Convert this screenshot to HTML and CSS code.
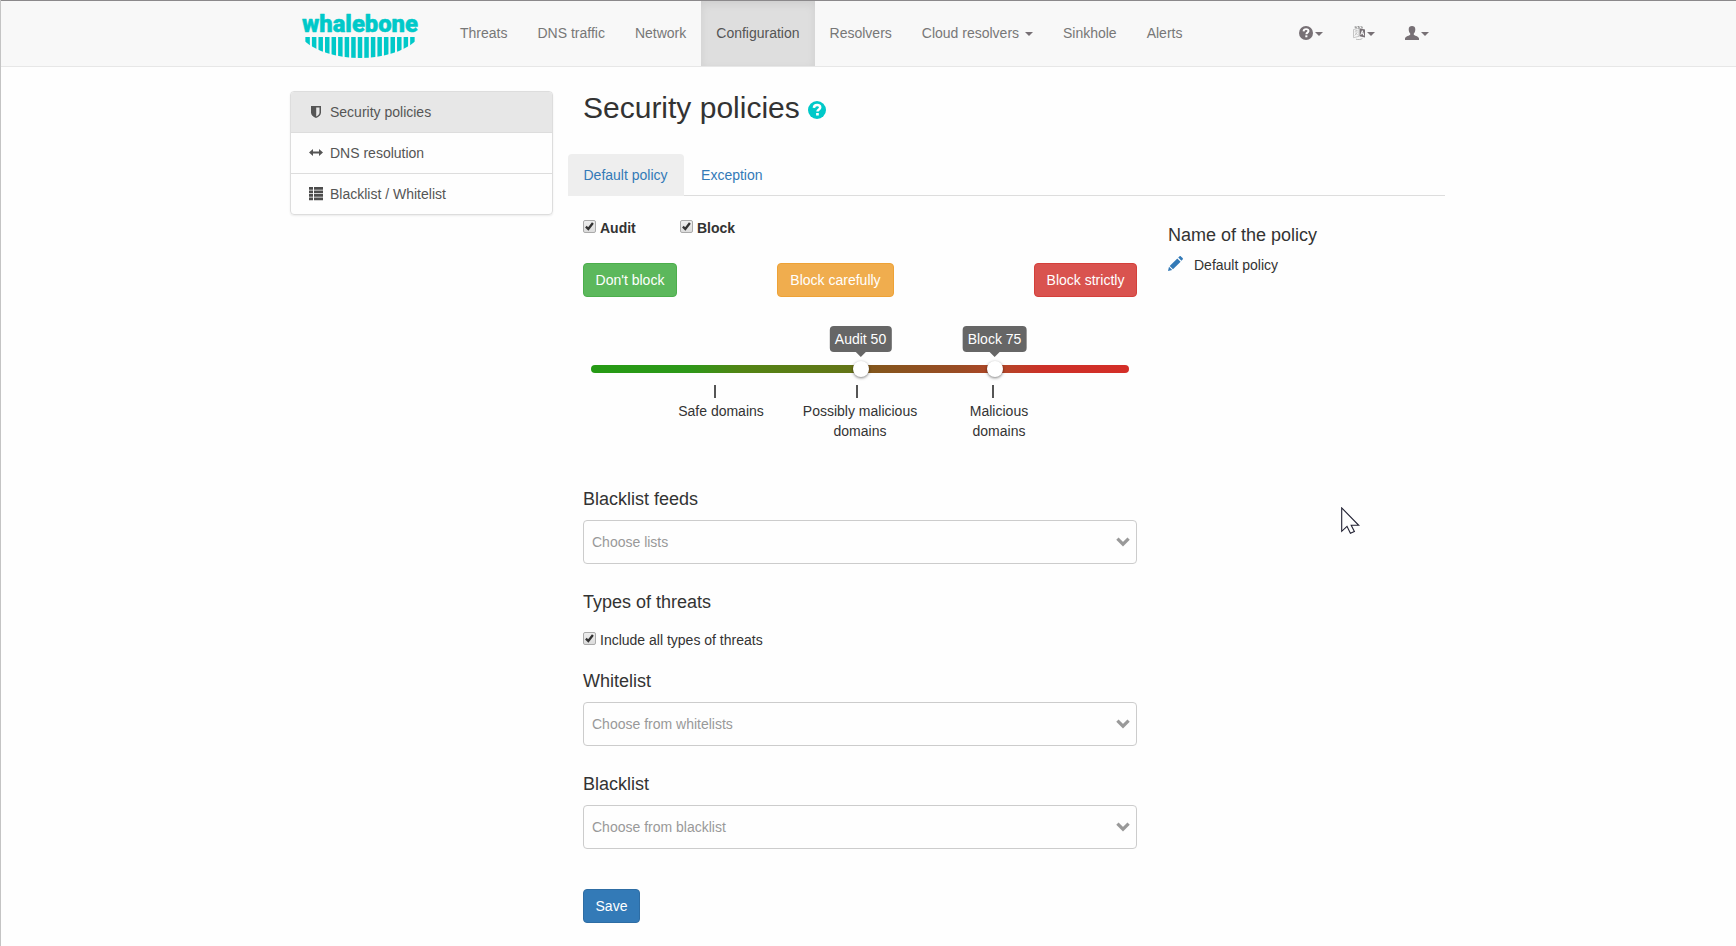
FILE: index.html
```html
<!DOCTYPE html>
<html lang="en">
<head>
<meta charset="utf-8">
<title>Security policies</title>
<link rel="stylesheet" href="styles.css">
</head>
<body>
<svg class="sprite" aria-hidden="true">
  <symbol id="check" viewBox="1 1 11 11"><path d="M2.900 6.700 5.300 9 9.900 3" fill="none" stroke="#333" stroke-width="2.300"/></symbol>
  <symbol id="chevron" viewBox="0 0 14 10"><path d="M1.400 1.600 7 7.200l5.600-5.600" fill="none" stroke="#999" stroke-width="3.200"/></symbol>
  <symbol id="question" viewBox="0 0 18 18"><circle cx="9" cy="9" r="9" fill="currentColor"/><path d="M5.900 6.900C6 4.900 7.200 4 9.100 4c1.900 0 3.100 1 3.100 2.500 0 2-2.700 2-2.700 4" fill="none" stroke="#fff" stroke-width="2.500"/><path d="M8.100 12h2.700v2.500H8.100z" fill="#fff"/></symbol>
</svg>
<header class="navbar">
  <div class="container navbar-inner">
    <a class="brand">
      <svg width="119" height="54" viewBox="0 -8 119 54">
        <defs><clipPath id="hull"><path d="M4 24H114V28.500C103 38 83 45 59 45S15 38 4 28.500Z"/></clipPath></defs>
        <text class="brand-text" x="1" y="18.700" textLength="116" lengthAdjust="spacingAndGlyphs">whalebone</text>
        <g clip-path="url(#hull)"><path class="brand-bars" d="M6.600 24v22m6.550-22v22m6.550-22v22m6.550-22v22m6.550-22v22m6.550-22v22m6.550-22v22m6.550-22v22m6.550-22v22m6.550-22v22m6.550-22v22m6.550-22v22m6.550-22v22m6.550-22v22m6.550-22v22m6.550-22v22m6.550-22v22"/></g>
      </svg>
    </a>
    <nav class="nav">
      <a>Threats</a><a>DNS traffic</a><a>Network</a><a class="active">Configuration</a><a>Resolvers</a><a>Cloud resolvers <i class="caret"></i></a><a>Sinkhole</a><a>Alerts</a>
    </nav>
    <nav class="nav tools">
      <a><svg width="14" height="14"><use href="#question"/></svg><i class="caret"></i></a>
      <a><svg width="12" height="14" viewBox="0 0 12 14"><path d="M6.500 2.300 12 3.500v8L6.500 10.300z" fill="#777075"/><path d="M7.800 8.800 9.300 4.700l1.500 4.800M8.300 7.700h2" fill="none" stroke="#f8f8f8"/><path d="M.5 3.500 6 2.300v8L.5 11.700zM1.800 5.300l3-.6M3.200 4v1.200M1.800 9.500 4.500 5.800M2.200 6.500l2.600 2.700" fill="none" stroke="#b9b9b9" stroke-width=".8"/><path d="M1.500 1 9.800 0M2 1.800h8" stroke="#888" stroke-width=".9" stroke-dasharray="2 1"/><path d="M3 13.200c2 .7 5 .5 6.500-.9" fill="none" stroke="#aaa" stroke-width=".8"/></svg><i class="caret"></i></a>
      <a><svg width="14" height="14" viewBox="0 0 14 14"><path d="M7 0C9 0 10.300 1.200 10.300 3.200c0 1.800-.5 3.300-1.500 4.200v1.400c0 .7 5.200 1.700 5.200 3.700V14H0v-1.500c0-2 5.200-3 5.200-3.700V7.400C4.200 6.500 3.700 5 3.700 3.200 3.700 1.200 5 0 7 0z" fill="#777075"/></svg><i class="caret"></i></a>
    </nav>
  </div>
</header>
<div class="container page">
  <aside class="list-group">
    <a class="active"><svg width="14" height="14" viewBox="0 0 14 14"><path fill-rule="evenodd" d="M2 1h10v6.500c0 2.500-2 4.300-5 5.500-3-1.200-5-3-5-5.500zM7.200 2.500v9c2-.9 3.300-2.200 3.300-4v-5z" fill="#555"/></svg>Security policies</a>
    <a><svg width="14" height="14" viewBox="0 0 14 14"><path d="M0 6.500 4 3v2.500h6V3l4 3.500-4 3.500V7.500H4V10z" fill="#555"/></svg>DNS resolution</a>
    <a><svg width="14" height="14" viewBox="0 0 14 14"><path d="M0 0h4v2.700H0zm5 0h9v2.700H5zM0 3.500h4v2.700H0zm5 0h9v2.700H5zM0 7h4v2.700H0zm5 0h9v2.700H5zM0 10.500h4v2.700H0zm5 0h9v2.700H5z" fill="#4c4c4c"/></svg>Blacklist / Whitelist</a>
  </aside>
  <main class="main">
    <h1>Security policies<svg width="18" height="18"><use href="#question"/></svg></h1>
    <div class="tabs"><a class="active">Default policy</a><a>Exception</a></div>
    <div class="columns">
      <form class="policy">
        <div class="modes">
          <label><svg class="checkbox"><use href="#check"/></svg>Audit</label>
          <label><svg class="checkbox"><use href="#check"/></svg>Block</label>
        </div>
        <div class="presets">
          <button type="button" class="btn success">Don't block</button>
          <button type="button" class="btn warning">Block carefully</button>
          <button type="button" class="btn danger">Block strictly</button>
        </div>
        <div class="slider">
          <div class="handle audit"><span class="tip">Audit 50</span></div>
          <div class="handle block"><span class="tip">Block 75</span></div>
        </div>
        <div class="scale">
          <div class="mark safe"><i></i>Safe domains</div>
          <div class="mark possible"><i></i>Possibly malicious<br>domains</div>
          <div class="mark malicious"><i></i>Malicious<br>domains</div>
        </div>
        <h4>Blacklist feeds</h4>
        <div class="select"><span>Choose lists</span><svg width="14" height="10"><use href="#chevron"/></svg></div>
        <h4>Types of threats</h4>
        <label class="include"><svg class="checkbox"><use href="#check"/></svg>Include all types of threats</label>
        <h4>Whitelist</h4>
        <div class="select"><span>Choose from whitelists</span><svg width="14" height="10"><use href="#chevron"/></svg></div>
        <h4>Blacklist</h4>
        <div class="select"><span>Choose from blacklist</span><svg width="14" height="10"><use href="#chevron"/></svg></div>
        <button type="button" class="btn primary">Save</button>
      </form>
      <section class="name">
        <h4>Name of the policy</h4>
        <p><svg width="15" height="15" viewBox="0 0 15 15"><path d="M0 15 1 10.800 4.200 14zM1.700 10 9.300 2.400l3.300 3.300L5 13.300zM10.200 1.600 11.400.4c.5-.5 1-.5 1.500 0l1.700 1.700c.5.5.5 1 0 1.500l-1.200 1.200z" fill="#337ab7"/></svg>Default policy</p>
      </section>
    </div>
  </main>
</div>
<svg class="cursor" width="20" height="28" viewBox="0 0 20 28"><path d="M.7.9V24.300L6 19.300l3.400 7 4-1.900L10.200 18.300h7.500z" fill="#fff" stroke="#223" stroke-width="1.100"/></svg>
</body>
</html>
```
FILE: styles.css
```css
* { box-sizing: border-box; }
body {
  margin: 0;
  height: 946px;
  overflow: hidden;
  border-left: 1px solid #c4c4c4;
  background: #fefefe;
  color: #333;
  font: 14px/20px "Liberation Sans", Arial, sans-serif;
}
.sprite { display: none; }
svg { flex: none; }
.container { width: 1170px; margin-left: 274px; padding: 0 15px; }
.navbar {
  height: 67px;
  border-top: 1px solid #8b898b;
  border-bottom: 1px solid #e7e7e7;
  background: #f8f8f8;
}
.navbar-inner { display: flex; height: 65px; padding-right: 0; }
.brand { flex: none; width: 155px; padding: 4px 0 0 11px; }
.brand svg { display: block; overflow: visible; }
.brand-text {
  font: 900 24px Roboto, sans-serif;
  fill: #00c9c9;
  stroke: #00c9c9;
  stroke-width: .5;
  stroke-linejoin: round;
}
.brand-bars { stroke: #00c9c9; stroke-width: 4.500; }
.nav { display: flex; flex: none; white-space: nowrap; }
.nav a { padding: 22px 15px 0; color: #777; }
.nav a.active {
  background: #dedede;
  box-shadow: inset 0 3px 9px rgba(0, 0, 0, .075);
  color: #555;
}
.caret {
  display: inline-block;
  margin-left: 2px;
  vertical-align: middle;
  border: 4px solid transparent;
  border-top-color: #777075;
  border-bottom: 0;
}
.tools { margin-left: 87px; }
.tools a { display: flex; align-items: center; padding: 0 15px 1px; color: #777075; }
.tools .caret { margin-top: 2px; }
.page { display: flex; gap: 15px; padding-top: 24px; padding-right: 0; }
.list-group {
  width: 263px;
  height: 124px;
  border: 1px solid #ddd;
  border-radius: 4px;
  box-shadow: 0 1px 2px rgba(0, 0, 0, .075);
  overflow: hidden;
}
.list-group a { display: flex; align-items: center; gap: 7px; height: 41px; padding: 0 18px 1px; color: #555; border-bottom: 1px solid #ddd; }
.list-group a.active { background: #e7e7e7; }
.main { width: 877px; }
h1, h4 { font-weight: 400; }
h1 { display: flex; align-items: center; gap: 8px; height: 33px; margin: 0 0 30px; padding-left: 15px; font-size: 30px; line-height: 33px; }
h1 svg { color: #00c9c9; margin-top: 5px; }
.tabs { display: flex; gap: 2px; height: 42px; border-bottom: 1px solid #ddd; }
.tabs a { height: 42px; padding: 11px 16px 0 15.500px; color: #337ab7; }
.tabs a.active { background: #eee; border-radius: 4px 4px 0 0; }
.columns { display: flex; gap: 31px; padding-left: 15px; }
.policy { width: 554px; }
.modes { display: flex; padding-top: 22px; font-weight: 700; }
label { display: flex; gap: 4px; }
.modes label { width: 97px; }
.checkbox { width: 13px; height: 13px; margin-top: 1.500px; border: 1px solid #aaa; border-radius: 2px; background: linear-gradient(#eee, #dcdcdc); }
.presets { display: flex; margin-top: 25px; }
.btn { height: 34px; padding: 0 0 1px; border: 1px solid; border-radius: 4px; color: #fff; font: inherit; }
.success { width: 94px; background: #5cb85c; border-color: #4cae4c; }
.warning { width: 117px; margin-left: 100px; background: #f0ad4e; border-color: #eea236; }
.danger { width: 103px; margin-left: auto; background: #d9534f; border-color: #d43f3a; }
.primary { display: block; width: 57px; margin-top: 40px; background: #337ab7; border-color: #2e6da4; }
.slider {
  position: relative;
  width: 538px;
  height: 8px;
  margin: 68px 0 0 8px;
  border-radius: 4px;
  background: linear-gradient(90deg, #259a14 0, #2d9819 18%, #528414 28%, #637517 48%, #83561c 52%, #994c24 68%, #b54427 77%, #cc3028 84%, #d42e27);
}
.handle { position: absolute; top: -4px; width: 16px; height: 16px; border-radius: 50%; background: #fff; box-shadow: 0 1px 3px rgba(0, 0, 0, .5); }
.audit { left: 262px; }
.block { left: 396px; }
.tip { position: absolute; left: 7.500px; bottom: 25px; transform: translateX(-50%); height: 26px; padding: 3px 5.500px; border-radius: 4px; background: #666; color: #fff; white-space: nowrap; }
.tip::after { content: ""; position: absolute; left: 50%; top: 100%; margin-left: -5px; border: 5px solid transparent; border-top-color: #666; border-bottom: 0; }
.scale { display: flex; height: 101px; padding-top: 12px; text-align: center; white-space: nowrap; }
.mark i { display: block; width: 2px; height: 13px; margin-bottom: 3px; background: #555; }
.safe { width: 86px; margin-left: 95px; }
.safe i { margin-left: 36px; }
.possible { width: 116px; margin-left: 38px; }
.possible i { margin-left: 54px; }
.malicious { width: 60px; margin-left: 51px; }
.malicious i { margin-left: 23px; }
h4 { height: 20px; margin: 0; font-size: 18px; line-height: 20px; }
.scale + h4 { margin-top: 15px; }
.select { display: flex; align-items: center; justify-content: space-between; height: 44px; margin: 11px 0 28px; padding: 0 6px 0 8px; border: 1px solid #ccc; border-radius: 4px; color: #999; }
.include { margin: 18px 0 21px; }
.name { padding-top: 29px; }
.name p { display: flex; gap: 11px; margin: 10px 0 0; }
.name p svg { margin-top: 1px; }
.cursor { position: absolute; left: 1341px; top: 507px; }
```
